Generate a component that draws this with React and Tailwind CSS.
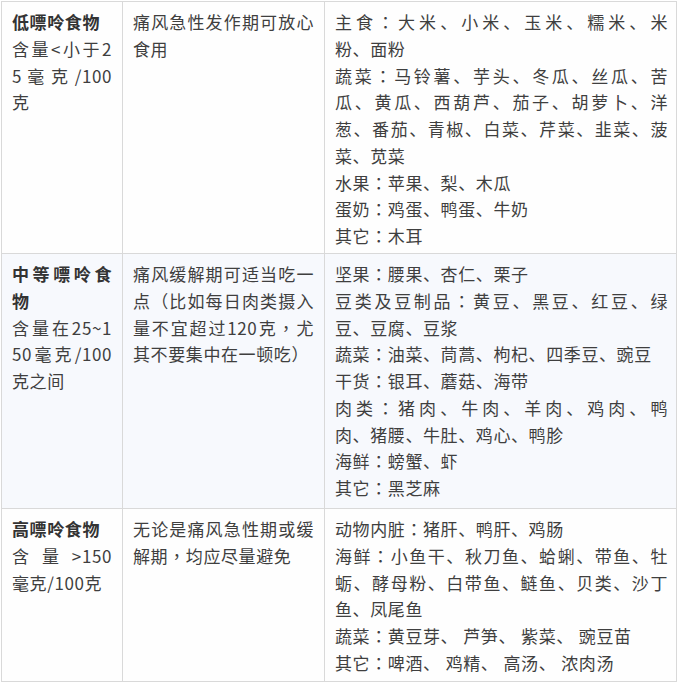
import React from "react";

const rows = [
  {
    h: "h-[252px] bg-[#fefefe]",
    c1: [
      { t: "低嘌呤食物", b: true },
      { t: "含量<小于2", j: true },
      { t: "5 毫 克 /100", j: true },
      { t: "克" },
    ],
    c2: [{ t: "痛风急性发作期可放心", j: true }, { t: "食用" }],
    c3: [
      { t: "主食：大米、小米、玉米、糯米、米", j: true },
      { t: "粉、面粉" },
      { t: "蔬菜：马铃薯、芋头、冬瓜、丝瓜、苦", j: true },
      { t: "瓜、黄瓜、西葫芦、茄子、胡萝卜、洋", j: true },
      { t: "葱、番茄、青椒、白菜、芹菜、韭菜、菠", j: true },
      { t: "菜、苋菜" },
      { t: "水果：苹果、梨、木瓜" },
      { t: "蛋奶：鸡蛋、鸭蛋、牛奶" },
      { t: "其它：木耳" },
    ],
  },
  {
    h: "h-[255px] bg-[#f7f9fd]",
    c1: [
      { t: "中等嘌呤食", b: true, j: true },
      { t: "物", b: true },
      { t: "含量在25~1", j: true },
      { t: "50毫克/100", j: true },
      { t: "克之间" },
    ],
    c2: [
      { t: "痛风缓解期可适当吃一", j: true },
      { t: "点（比如每日肉类摄入", j: true },
      { t: "量不宜超过120克，尤", j: true },
      { t: "其不要集中在一顿吃）" },
    ],
    c3: [
      { t: "坚果：腰果、杏仁、栗子" },
      { t: "豆类及豆制品：黄豆、黑豆、红豆、绿", j: true },
      { t: "豆、豆腐、豆浆" },
      { t: "蔬菜：油菜、茼蒿、枸杞、四季豆、豌豆" },
      { t: "干货：银耳、蘑菇、海带" },
      { t: "肉类：猪肉、牛肉、羊肉、鸡肉、鸭", j: true },
      { t: "肉、猪腰、牛肚、鸡心、鸭胗" },
      { t: "海鲜：螃蟹、虾" },
      { t: "其它：黑芝麻" },
    ],
  },
  {
    h: "h-[173px] bg-[#fefefe]",
    c1: [
      { t: "高嘌呤食物", b: true },
      { t: "含 量 >150", j: true },
      { t: "毫克/100克" },
    ],
    c2: [{ t: "无论是痛风急性期或缓", j: true }, { t: "解期，均应尽量避免" }],
    c3: [
      { t: "动物内脏：猪肝、鸭肝、鸡肠" },
      { t: "海鲜：小鱼干、秋刀鱼、蛤蜊、带鱼、牡", j: true },
      { t: "蛎、酵母粉、白带鱼、鲢鱼、贝类、沙丁", j: true },
      { t: "鱼、凤尾鱼" },
      { t: "蔬菜：黄豆芽、_芦笋、_紫菜、_豌豆苗" },
      { t: "其它：啤酒、_鸡精、_高汤、_浓肉汤" },
    ],
  },
];

function Text({ t }) {
  const parts = t.split(/([：，_])/);
  return parts.map((p, i) =>
    p === "：" ? (
      <span key={i} className="[font-family:'Noto_Sans_CJK_JP','Noto_Sans_CJK_SC',sans-serif]">
        {p}
      </span>
    ) : p === "，" ? (
      <span key={i} className="[font-family:'Noto_Sans_CJK_TC','Noto_Sans_CJK_SC',sans-serif]">
        {p}
      </span>
    ) : p === "_" ? (
      <span key={i} className="inline-block w-[5px]" />
    ) : (
      <React.Fragment key={i}>{p}</React.Fragment>
    )
  );
}

function Lines({ lines }) {
  return (
    <>
      {lines.map((l, i) => (
        <div
          key={i}
          className={
            (l.j ? "text-justify [text-align-last:justify] " : "") +
            (l.b ? "font-bold text-[#333333]" : "")
          }
        >
          <Text t={l.t} />
        </div>
      ))}
    </>
  );
}

export default function App() {
  return (
    <div className="min-h-[685px] w-[680px] bg-white pl-[1px] pt-[1px]">
      <div className="grid w-[676px] grid-cols-[121px_202px_352px] border-b border-r border-[#d9d9d9] text-[17px] leading-[26.75px] tracking-[0.6px] text-[#3f3f3f] [font-family:'Noto_Sans_CJK_SC','Noto_Sans',sans-serif]">
        {rows.map((r, i) => (
          <React.Fragment key={i}>
            <div className={`${r.h} border-l border-t border-[#d9d9d9] px-[10px] pt-[7px]`}>
              <Lines lines={r.c1} />
            </div>
            <div className={`${r.h} border-l border-t border-[#d9d9d9] px-[10px] pt-[7px]`}>
              <Lines lines={r.c2} />
            </div>
            <div className={`${r.h} border-l border-t border-[#d9d9d9] pl-[10px] pr-[8px] pt-[7px]`}>
              <Lines lines={r.c3} />
            </div>
          </React.Fragment>
        ))}
      </div>
    </div>
  );
}
